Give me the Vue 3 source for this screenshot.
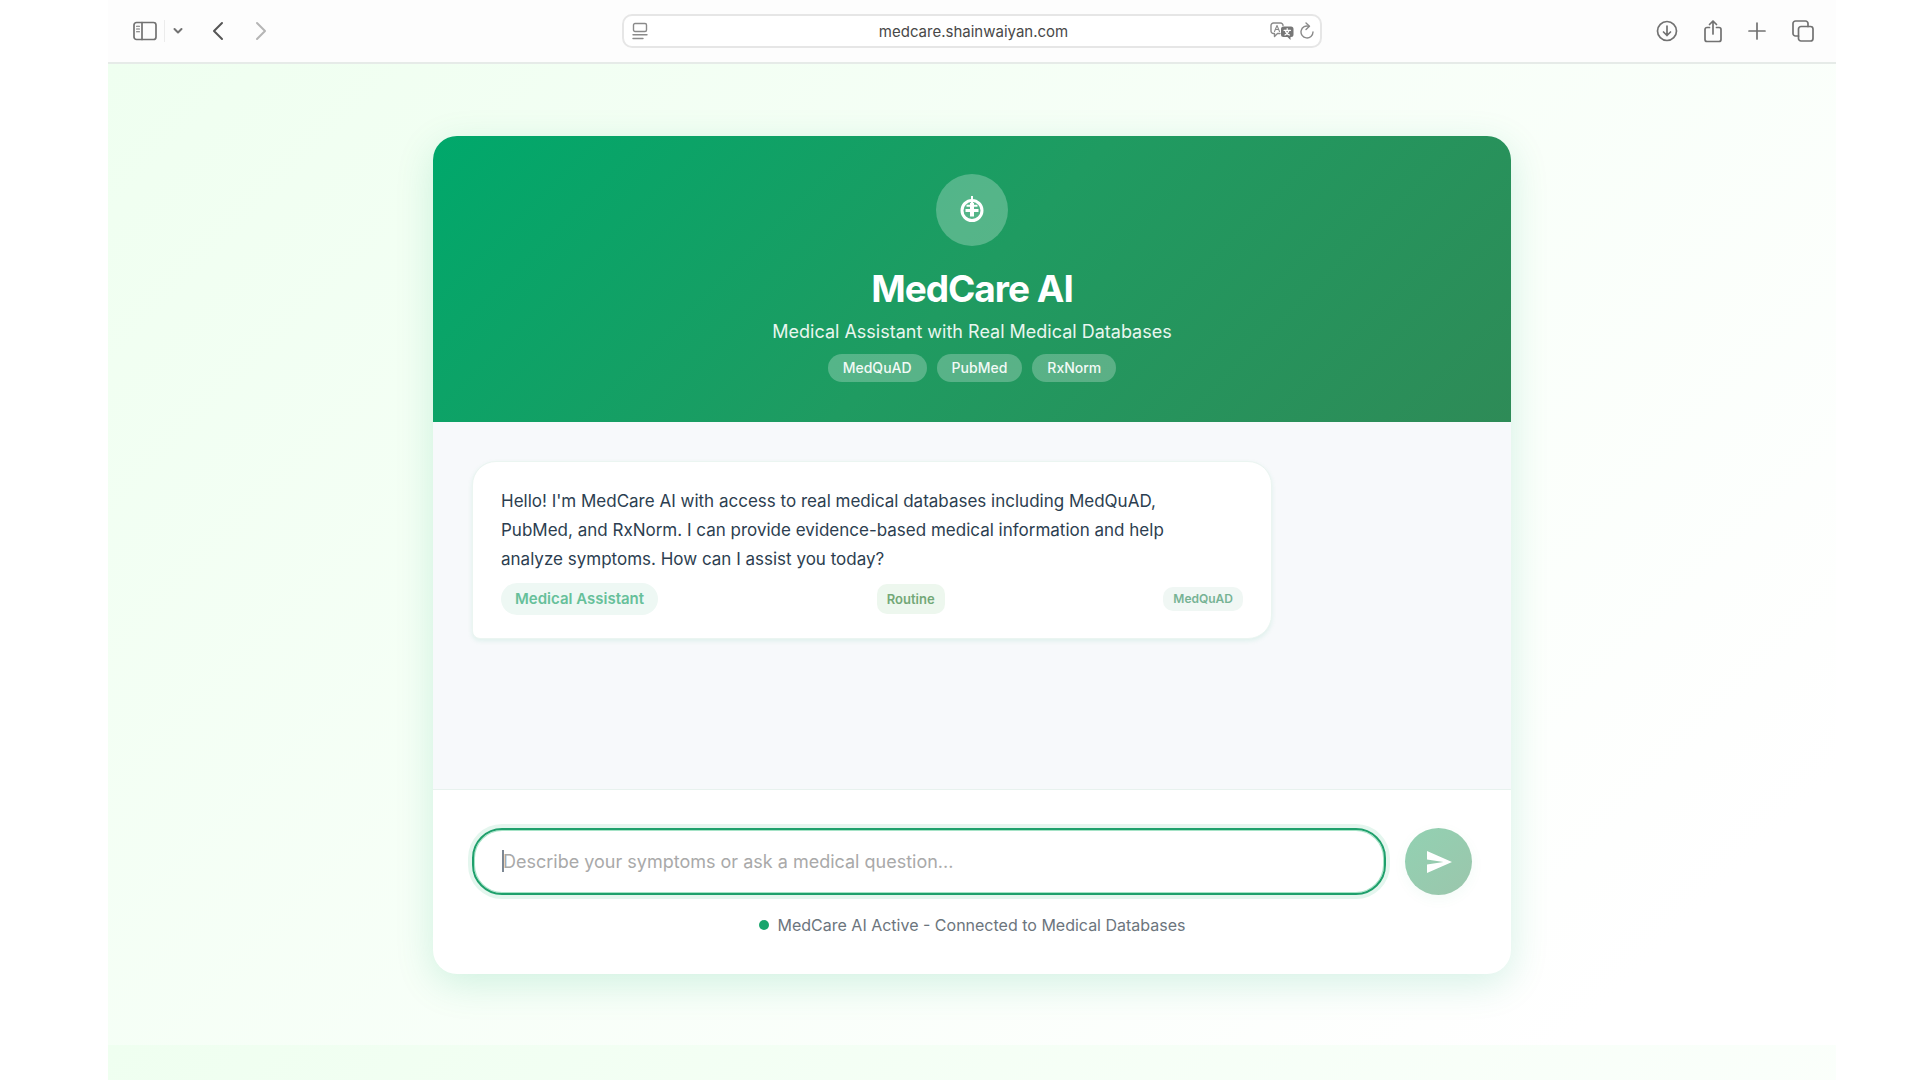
<script setup>
import { ref } from 'vue'

const address = ref('medcare.shainwaiyan.com')
const question = ref('')

const databases = ['MedQuAD', 'PubMed', 'RxNorm']

const messages = ref([
  {
    id: 1,
    text: "Hello! I'm MedCare AI with access to real medical databases including MedQuAD, PubMed, and RxNorm. I can provide evidence-based medical information and help analyze symptoms. How can I assist you today?",
    agent: 'Medical Assistant',
    urgency: 'Routine',
    source: 'MedQuAD',
  },
])
</script>

<template>
  <div class="window">
    <!-- browser toolbar -->
    <header class="toolbar">
      <div class="tools tools-left">
        <button type="button" class="tool" aria-label="Show sidebar">
          <svg width="24" height="20" viewBox="0 0 24 20">
            <rect x="1" y="1.5" width="22" height="17" rx="2.5" />
            <path d="M9 1.5v17" />
            <path class="thin" d="M3.5 5.2h3M3.5 8h3M3.5 10.8h3" />
          </svg>
        </button>
        <span class="divider"></span>
        <button type="button" class="tool menu" aria-label="Tab groups">
          <svg width="10" height="8" viewBox="0 0 10 8"><path class="bold" d="M1.5 2L5 5.5 8.5 2" /></svg>
        </button>
        <button type="button" class="tool back" aria-label="Back">
          <svg width="12" height="20" viewBox="0 0 12 20"><path class="bold" d="M10 2L2 10l8 8" /></svg>
        </button>
        <button type="button" class="tool forward" aria-label="Forward" disabled>
          <svg width="12" height="20" viewBox="0 0 12 20"><path class="bold" d="M2 2l8 8-8 8" /></svg>
        </button>
      </div>

      <div class="address">
        <button type="button" class="tool" aria-label="Page settings">
          <svg width="16" height="18" viewBox="0 0 16 18">
            <rect x="1.5" y="1.5" width="13" height="8" rx="1.5" />
            <path d="M1 12.8h14M1 16.5h10" />
          </svg>
        </button>
        <input v-model="address" class="address-input" type="text" aria-label="Address" />
        <button type="button" class="tool" aria-label="Translate">
          <svg width="24" height="18" viewBox="0 0 24 18">
            <path d="M10 11.5H7.5l-3 3v-3h-1A2.5 2.5 0 0 1 1 9V3.5A2.5 2.5 0 0 1 3.5 1h7A2.5 2.5 0 0 1 13 3.5" />
            <path class="thin" d="M4.5 9.5L7 3.5l2.5 6M5.5 7.5h3" />
            <path class="solid" d="M13.5 4.5H21A2.5 2.5 0 0 1 23.5 7v5.500A2.5 2.5 0 0 1 21 15h-.5v3l-3-3h-4a2.5 2.5 0 0 1-2.500-2.500V7a2.5 2.5 0 0 1 2.500-2.500z" />
            <path class="cutout" d="M14 8.3h6.5M17.2 6.5v1.800M15 13c2-1 3.500-2.500 4-4.500M15.500 9c.5 2 2 3.300 4 4" />
          </svg>
        </button>
        <button type="button" class="tool" aria-label="Reload">
          <svg width="14" height="18" viewBox="0 0 14 18">
            <path d="M9 4.3A6 6 0 1 0 13 10" />
            <path d="M6 1l3.5 3.3L6 7.5" />
          </svg>
        </button>
      </div>

      <div class="tools tools-right">
        <button type="button" class="tool" aria-label="Downloads">
          <svg width="22" height="22" viewBox="0 0 22 22">
            <circle cx="11" cy="11" r="9.5" />
            <path d="M11 6v9.5M7.5 12l3.5 3.5 3.5-3.5" />
          </svg>
        </button>
        <button type="button" class="tool" aria-label="Share">
          <svg width="18" height="24" viewBox="0 0 18 24">
            <path d="M5.5 8.5H3a2 2 0 0 0-2 2v10a2 2 0 0 0 2 2h12a2 2 0 0 0 2-2v-10a2 2 0 0 0-2-2h-2.5" />
            <path d="M9 15V2M5.5 5.5L9 2l3.5 3.5" />
          </svg>
        </button>
        <button type="button" class="tool" aria-label="New tab">
          <svg width="18" height="18" viewBox="0 0 18 18"><path d="M9 1v16M1 9h16" /></svg>
        </button>
        <button type="button" class="tool" aria-label="Tab overview">
          <svg width="22" height="22" viewBox="0 0 22 22">
            <rect x="6.5" y="6.5" width="14.5" height="14.5" rx="2.5" />
            <path d="M6.5 16h-3A2.5 2.5 0 0 1 1 13.5v-10A2.5 2.5 0 0 1 3.5 1h10A2.5 2.5 0 0 1 16 3.5v3" />
          </svg>
        </button>
      </div>
    </header>

    <main class="page">
      <section class="card">
        <header class="hero">
          <div class="logo">
            <svg width="26" height="28" viewBox="0 0 26 28">
              <circle cx="13" cy="15.5" r="10" />
              <path class="stem" d="M13 8v13.5" />
              <path class="bar" d="M6.5 15.5h13" />
              <path class="rung" d="M7.5 10.8h11" />
              <path class="tip" d="M13 1v8" />
            </svg>
          </div>
          <h1>MedCare AI</h1>
          <p class="subtitle">Medical Assistant with Real Medical Databases</p>
          <ul class="databases">
            <li v-for="name in databases" :key="name">{{ name }}</li>
          </ul>
        </header>

        <div class="chat">
          <article v-for="message in messages" :key="message.id" class="message">
            <p>{{ message.text }}</p>
            <footer class="badges">
              <span class="badge agent">{{ message.agent }}</span>
              <span class="badge urgency">{{ message.urgency }}</span>
              <span class="badge source">{{ message.source }}</span>
            </footer>
          </article>
        </div>

        <div class="composer">
          <form class="ask" @submit.prevent>
            <div class="field">
              <input
                v-model="question"
                type="text"
                aria-label="Your question"
                placeholder="Describe your symptoms or ask a medical question..."
              />
              <span v-if="!question" class="caret"></span>
            </div>
            <button type="submit" class="send" aria-label="Send" :disabled="!question">
              <svg width="28" height="24" viewBox="0 0 28 24">
                <path d="M2 1l25 11L2 23v-8.5L18.5 12 2 9.5z" />
              </svg>
            </button>
          </form>
          <p class="status"><span class="dot"></span>MedCare AI Active - Connected to Medical Databases</p>
        </div>
      </section>
    </main>
  </div>
</template>

<style>
body {
  margin: 0;
  background: #fff;
}
</style>

<style scoped>
* {
  box-sizing: border-box;
}

.window {
  display: flex;
  flex-direction: column;
  min-height: 100vh;
  margin: 0 84px 0 108px;
  font-family: Inter, "Liberation Sans", sans-serif;
}

h1,
p,
ul {
  margin: 0;
  padding: 0;
}

button,
input {
  font-family: inherit;
}

/* toolbar */
.toolbar {
  display: grid;
  grid-template-columns: 1fr minmax(0, 700px) 1fr;
  align-items: center;
  height: 64px;
  background: #fdfdfd;
  border-bottom: 2px solid #e6ebe8;
}

.tools {
  display: flex;
  align-items: center;
}

.tools-left {
  padding-left: 25px;
}

.tools-right {
  justify-content: flex-end;
  gap: 26px;
  padding-right: 22px;
}

.tool {
  display: flex;
  padding: 0;
  border: 0;
  background: none;
}

.tool svg {
  fill: none;
  stroke: #727272;
  stroke-width: 1.7;
  stroke-linecap: round;
  stroke-linejoin: round;
}

.tool .thin {
  stroke-width: 1.1;
}

.tool .bold {
  stroke-width: 2;
}

.tool .solid {
  fill: #777;
  stroke: none;
}

.tool .cutout {
  stroke: #fff;
  stroke-width: 1.2;
}

.divider {
  width: 1px;
  height: 22px;
  margin: 0 8px 0 7px;
  background: #ececec;
}

.back {
  margin-left: 29px;
}

.back svg {
  stroke: #555;
}

.forward {
  margin-left: 31px;
}

.forward svg {
  stroke: #b5b5b5;
}

.address {
  display: flex;
  align-items: center;
  gap: 6px;
  height: 34px;
  padding: 0 6px 0 8px;
  border: 2px solid #e6e6e6;
  border-radius: 10px;
  background: #fff;
}

.address .tool svg {
  stroke: #8a8a8a;
  stroke-width: 1.4;
}

.address .tool .cutout {
  stroke: #fff;
}

.address-input {
  flex: 1;
  min-width: 0;
  padding: 1px 0 0 29px;
  border: 0;
  outline: 0;
  background: none;
  color: #484848;
  font-size: 15px;
  line-height: 20px;
  text-align: center;
}

/* page */
.page {
  flex: 1;
  padding: 72px 24px;
  background: linear-gradient(135deg, #effff0 0%, #fff 90%) 0 0 / 100% 981px;
}

.card {
  max-width: 1078px;
  margin: 0 auto;
  overflow: hidden;
  border-radius: 24px;
  background: #fff;
  box-shadow: 0 10px 38px rgba(0, 168, 107, 0.16);
}

.hero {
  display: flex;
  flex-direction: column;
  align-items: center;
  padding: 38px 38px 40px;
  background: linear-gradient(135deg, #00a86b 0%, #1f9b61 50%, #2e8b57 100%);
  color: #fff;
  text-align: center;
}

.logo {
  display: flex;
  align-items: center;
  justify-content: center;
  width: 72px;
  height: 72px;
  padding-bottom: 2px;
  border-radius: 50%;
  background: rgba(255, 255, 255, 0.25);
}

.logo svg {
  fill: none;
  stroke: #fff;
  stroke-width: 3;
}

.logo .stem {
  stroke-width: 4;
}

.logo .rung,
.logo .tip {
  stroke-width: 2;
}

h1 {
  margin-top: 20px;
  font-size: 37px;
  font-weight: 700;
  line-height: 46px;
  letter-spacing: -1px;
}

.subtitle {
  margin-top: 8px;
  font-size: 18px;
  line-height: 24px;
  color: #e9f6ef;
}

.databases {
  display: flex;
  flex-wrap: wrap;
  gap: 10px;
  margin-top: 10px;
  list-style: none;
}

.databases li {
  padding: 0 15px;
  border-radius: 14px;
  background: rgba(255, 255, 255, 0.25);
  color: #f2faf6;
  font-size: 14px;
  font-weight: 500;
  line-height: 28px;
}

/* chat */
.chat {
  min-height: 367px;
  padding: 39px;
  background: #f7f9fb;
}

.message {
  max-width: 80%;
  padding: 25px 28px 23px;
  border: 1px solid #ebf5f1;
  border-radius: 24px 24px 24px 8px;
  background: #fff;
  box-shadow: 0 2px 5px rgba(0, 168, 107, 0.1);
}

.message p {
  padding-right: 28px;
  color: #2c3e50;
  font-size: 17px;
  line-height: 29px;
}

.badges {
  display: flex;
  align-items: center;
  justify-content: space-between;
  margin-top: 9px;
}

.badge {
  font-weight: 600;
}

.agent {
  padding: 0 14px;
  border-radius: 16px;
  background: #eef8f4;
  color: #66c09a;
  font-size: 15px;
  line-height: 32px;
}

.urgency {
  padding: 0 10px;
  border-radius: 10px;
  background: #edf7ee;
  color: #73a877;
  font-size: 13px;
  line-height: 30px;
}

.source {
  padding: 0 10px;
  border-radius: 10px;
  background: #f0f7f4;
  color: #77b394;
  font-size: 12px;
  line-height: 24px;
}

/* composer */
.composer {
  padding: 38px 39px 37px;
  border-top: 1px solid #e8f2ee;
}

.ask {
  display: flex;
  gap: 19px;
}

.field {
  position: relative;
  flex: 1;
}

.field input {
  width: 100%;
  height: 67px;
  padding: 0 29px;
  border: 2px solid #1fa06c;
  border-radius: 30px;
  outline: 0;
  background: #fff;
  box-shadow: 0 0 0 4px #e4f6ee, inset 0 0 0 1px #a5e3c6;
  color: #2c3e50;
  font-size: 18px;
}

.field input::placeholder {
  color: #a9a9a9;
  opacity: 1;
}

.caret {
  position: absolute;
  top: 22px;
  left: 30px;
  width: 2px;
  height: 22px;
  background: #7d8894;
}

.send {
  display: flex;
  align-items: center;
  justify-content: center;
  width: 67px;
  height: 67px;
  padding: 0;
  border: 0;
  border-radius: 50%;
  background: linear-gradient(135deg, #00a86b 0%, #2e8b57 100%);
  box-shadow: 0 4px 14px rgba(0, 168, 107, 0.05);
}

.send:disabled {
  background: linear-gradient(135deg, #92d1b2 0%, #9bc6ac 100%);
}

.send svg {
  fill: #fff;
}

.status {
  display: flex;
  align-items: center;
  justify-content: center;
  gap: 9px;
  margin-top: 18px;
  color: #6c757d;
  font-size: 16px;
  line-height: 24px;
}

.dot {
  width: 10px;
  height: 10px;
  border-radius: 50%;
  background: #18a56c;
}
</style>
